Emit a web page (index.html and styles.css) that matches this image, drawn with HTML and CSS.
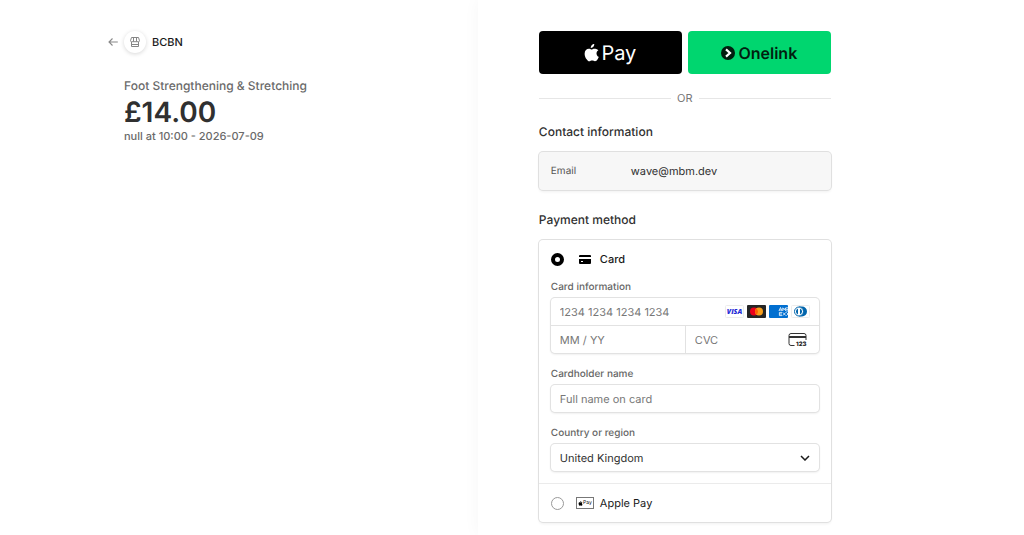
FILE: index.html
```html
<!DOCTYPE html>
<html lang="en">
  <head>
    <meta charset="UTF-8" />
    <meta name="viewport" content="width=device-width, initial-scale=1.0" />
    <title>BCBN Checkout</title>
    <link rel="stylesheet" href="styles.css">
  </head>
  <body>
    <!-- shared apple shape -->
    <svg class="defs" width="0" height="0" aria-hidden="true">
      <symbol id="apple" viewBox="0 0 14 17">
        <path d="M9.6 0c.1 1-.3 2-.9 2.700-.6.7-1.500 1.200-2.400 1.100-.1-1 .4-2 .9-2.600C7.800.5 8.800 0 9.600 0zM13.500 5.800c-.1.1-1.800 1-1.800 3.100 0 2.400 2.100 3.200 2.200 3.200 0 .1-.3 1.200-1.100 2.300-.7 1-1.400 1.900-2.500 1.900s-1.400-.6-2.700-.6c-1.200 0-1.700.7-2.700.7s-1.700-.9-2.500-2C1.300 13 .5 11 .5 9.100c0-3.100 2-4.700 4-4.700 1.100 0 1.900.7 2.600.7.600 0 1.600-.7 2.900-.7.5 0 2.300 0 3.500 1.400z" fill="currentColor"/>
      </symbol>
    </svg>

    <div class="checkout">
      <!-- SUMMARY -->
      <div class="summary">
        <header class="header">
          <a class="back" href="#" aria-label="Back">
            <svg width="10" height="10" viewBox="0 0 10 10"><path d="M9.800 5H1M4.500 1.500L1 5l3.500 3.500" fill="none" stroke="#888" stroke-width="1.100"/></svg>
          </a>
          <span class="store-icon">
            <svg width="10" height="10" viewBox="0 0 10 10" fill="none" stroke="#858585" stroke-width="1">
              <path d="M1.500.5h7l1 3.200a1 1 0 0 1-1 1h-7a1 1 0 0 1-1-1zM3.500.5v4M6.500.5v4M1.500 5v4.500h7V5M1.500 7.500h7"/>
            </svg>
          </span>
          <span class="store-name">BCBN</span>
        </header>
        <div class="product">
          <h1>Foot Strengthening &amp; Stretching</h1>
          <div class="price">£14.00</div>
          <p>null at 10:00 - 2026-07-09</p>
        </div>
      </div>

      <!-- PAYMENT -->
      <main class="payment">
        <form class="form">
          <div class="express">
            <button type="button" class="apple-btn" aria-label="Apple Pay">
              <svg width="15" height="18"><use href="#apple"/></svg>
              <span>Pay</span>
            </button>
            <button type="button" class="onelink-btn">
              <svg width="14" height="14" viewBox="0 0 14 14"><circle cx="7" cy="7" r="7" fill="#011e0f"/><path d="M5 3.400L9 7 5 10.600" fill="none" stroke="#fff" stroke-width="2.200"/></svg>
              <span>Onelink</span>
            </button>
          </div>

          <div class="or">OR</div>

          <h2>Contact information</h2>
          <div class="box contact">
            <span class="contact-label">Email</span>
            <span>wave@mbm.dev</span>
          </div>

          <h2>Payment method</h2>
          <div class="box">
            <div class="card-section">
              <label class="method card-method">
                <input type="radio" name="method" checked />
                <span class="method-icon">
                  <svg width="12" height="9" viewBox="0 0 12 9"><path d="M0 1a1 1 0 0 1 1-1h10a1 1 0 0 1 1 1v1H0zM0 4h12v4a1 1 0 0 1-1 1H1a1 1 0 0 1-1-1z"/><path d="M2 6h2v1H2z" fill="#fff"/></svg>
                </span>
                Card
              </label>

              <label class="label" for="card-number">Card information</label>
              <div class="field-group">
                <div class="field">
                  <input id="card-number" type="text" placeholder="1234 1234 1234 1234" />
                  <span class="brands">
                    <svg width="19" height="13" viewBox="0 0 19 13"><rect x=".5" y=".5" width="18" height="12" rx="1" fill="#fff" stroke="#ececec"/><text x="9.500" y="9" text-anchor="middle" font-family="Open Sans, sans-serif" font-size="7" font-weight="800" font-style="italic" fill="#1f2bd6">VISA</text></svg>
                    <svg width="19" height="13" viewBox="0 0 19 13"><rect width="19" height="13" rx="1" fill="#252525"/><circle cx="7" cy="6.500" r="4" fill="#eb001b"/><circle cx="12" cy="6.500" r="4" fill="#f79e1b"/><path d="M9.500 3.400a4 4 0 0 1 0 6.200 4 4 0 0 1 0-6.200z" fill="#ff5f00"/></svg>
                    <svg width="19" height="13" viewBox="0 0 19 13"><rect width="19" height="13" rx="1" fill="#016fd0"/><g fill="none" stroke="#fff" stroke-width=".8"><path d="M10 6l1.500-3.500L13 6M10.500 5h2M13.800 6V2.800l1.400 2 1.400-2V6M17.200 2.800H19M17.200 4.400H19M17.200 6H19M13 7.400h-2.600v3.200H13M10.400 9H13M13.800 7.400l3 3.200M16.800 7.400l-3 3.200M17.500 7.400L19 9l-1.500 1.600"/></g></svg>
                    <svg width="19" height="13" viewBox="0 0 19 13"><rect x=".5" y=".5" width="18" height="12" rx="1" fill="#fff" stroke="#ececec"/><path d="M8 1.500h3a5 5 0 0 1 0 10H8z" fill="#0165ac"/><circle cx="8" cy="6.500" r="4.500" fill="#fff" stroke="#0165ac" stroke-width="1"/><path d="M7 3.500a3.200 3.200 0 0 0 0 6zM9 3.500a3.200 3.200 0 0 1 0 6z" fill="#0165ac"/></svg>
                  </span>
                </div>
                <div class="field-row">
                  <div class="field"><input type="text" placeholder="MM / YY" aria-label="Expiration" /></div>
                  <div class="field">
                    <input type="text" placeholder="CVC" aria-label="CVC" />
                    <svg class="cvc-icon" width="19" height="14" viewBox="0 0 19 14"><path d="M6.500 12.500H3a2 2 0 0 1-2-2v-8a2 2 0 0 1 2-2h13a2 2 0 0 1 2 2V7" fill="none" stroke="#333"/><path d="M1 3h17v2H1z" fill="#333"/><text x="8" y="13" font-family="Inter, sans-serif" font-size="6" font-weight="800" fill="#222">123</text></svg>
                  </div>
                </div>
              </div>

              <label class="label" for="name">Cardholder name</label>
              <div class="field single"><input id="name" type="text" placeholder="Full name on card" /></div>

              <label class="label" for="country">Country or region</label>
              <div class="field single">
                <select id="country">
                  <option>United Kingdom</option>
                </select>
                <svg class="chevron" width="10" height="6" viewBox="0 0 10 6"><path d="M1 1l4 4 4-4" fill="none" stroke="#1a1a1a" stroke-width="1.500"/></svg>
              </div>
            </div>

            <label class="method apple-method">
              <input type="radio" name="method" />
              <span class="method-icon">
                <span class="apple-mark"><svg width="5" height="5"><use href="#apple"/></svg>Pay</span>
              </span>
              Apple Pay
            </label>
          </div>
        </form>
      </main>
    </div>
  </body>
</html>
```
FILE: styles.css
```css
* {
  box-sizing: border-box;
  margin: 0;
  padding: 0;
}

body {
  background-color: #fff;
  color: #303030;
  font-family: Inter, system-ui, sans-serif;
  font-size: 11px;
  line-height: 14px;
  text-rendering: geometricPrecision;
}

input,
select,
button {
  font: inherit;
  color: inherit;
  text-rendering: inherit;
}

svg {
  display: block;
  flex-shrink: 0;
}

.defs {
  position: absolute;
}

.checkout {
  display: grid;
  grid-template-columns: 7fr 8fr;
  min-height: 100vh;
}

/* SUMMARY */
.summary {
  padding: 31px 24px 0 108px;
}

.header {
  display: flex;
  align-items: center;
  gap: 6px;
}

.store-icon {
  display: flex;
  align-items: center;
  justify-content: center;
  width: 22px;
  height: 22px;
  border-radius: 50%;
  background-color: #fff;
  box-shadow: 0 1px 4px rgba(0, 0, 0, 0.16);
}

.store-name {
  font-weight: 500;
  color: #1a1a1a;
}

.product {
  margin: 25px 0 0 16px;
  font-weight: 500;
  color: #6a6a6a;
}

.product h1 {
  font-size: 12px;
  line-height: 16px;
  font-weight: 500;
}

.price {
  font-size: 28px;
  line-height: 36px;
  font-weight: 600;
  color: #303030;
}

.product p {
  line-height: 12px;
}

/* PAYMENT */
.payment {
  padding: 31px 24px 12px 61px;
  box-shadow: 0 0 16px rgba(0, 0, 0, 0.04);
}

.form {
  max-width: 292px;
}

.express {
  display: grid;
  grid-template-columns: 1fr 1fr;
  gap: 6px;
}

.express button {
  display: flex;
  align-items: center;
  justify-content: center;
  height: 43px;
  border: none;
  border-radius: 4px;
  cursor: pointer;
}

.express .apple-btn {
  gap: 2px;
  background-color: #000;
  color: #fff;
  font-size: 20px;
}

.express .onelink-btn {
  gap: 3px;
  background-color: #00d66f;
  color: #011e0f;
  font-size: 16px;
  font-weight: 600;
}

.or {
  display: flex;
  align-items: center;
  gap: 6px;
  margin: 16px 0 18px;
  line-height: 16px;
  color: #777;
}

.or::before,
.or::after {
  content: "";
  flex: 1;
  height: 1px;
  background-color: #e6e6e6;
}

h2 {
  margin-bottom: 12px;
  font-size: 12px;
  line-height: 16px;
  font-weight: 500;
}

.box {
  border-radius: 4px;
  box-shadow: 0 0 0 1px #e0e0e0, 0 2px 3px rgba(0, 0, 0, 0.06);
}

.contact {
  display: flex;
  align-items: center;
  margin-bottom: 22px;
  padding: 12px;
  background-color: #f7f7f7;
}

.contact-label {
  width: 80px;
  font-size: 10px;
  color: #555;
}

.card-section {
  padding: 12px;
  border-bottom: 1px solid #ebebeb;
}

.method {
  display: flex;
  align-items: center;
  color: #1a1a1a;
  cursor: pointer;
}

.card-method {
  font-weight: 500;
}

.method input {
  appearance: none;
  width: 13px;
  height: 13px;
  border: 1px solid #999;
  border-radius: 50%;
}

.method input:checked {
  border: 4px solid #000;
}

.method-icon {
  display: flex;
  justify-content: center;
  width: 18px;
  margin: 0 6px 0 12px;
}

.apple-method {
  padding: 12px;
}

.apple-mark {
  display: flex;
  align-items: center;
  justify-content: center;
  width: 18px;
  height: 12px;
  border: 1px solid #777;
  color: #000;
  font-size: 5px;
  line-height: 10px;
}

.label {
  display: block;
  margin: 14px 0 4px;
  font-size: 10px;
  font-weight: 500;
  color: #666;
}

.field-group,
.single {
  border-radius: 4px;
  box-shadow: 0 0 0 1px #e2e2e2, 0 1px 2px 1px rgba(0, 0, 0, 0.06);
}

.field {
  display: flex;
  align-items: center;
  position: relative;
  height: 27px;
}

.field input,
.field select {
  flex: 1;
  width: 100%;
  min-width: 0;
  height: 100%;
  padding: 0 9px;
  border: none;
  outline: none;
  border-radius: 4px;
  background-color: transparent;
}

.field select {
  appearance: none;
}

::placeholder {
  color: #777;
  opacity: 1;
}

.field-row {
  display: grid;
  grid-template-columns: 1fr 1fr;
  border-top: 1px solid #e2e2e2;
}

.field-row .field + .field {
  border-left: 1px solid #e2e2e2;
}

.brands {
  display: flex;
  gap: 3px;
  margin-right: 9px;
}

.cvc-icon {
  margin-right: 12px;
}

.chevron {
  position: absolute;
  right: 9px;
  pointer-events: none;
}
```
